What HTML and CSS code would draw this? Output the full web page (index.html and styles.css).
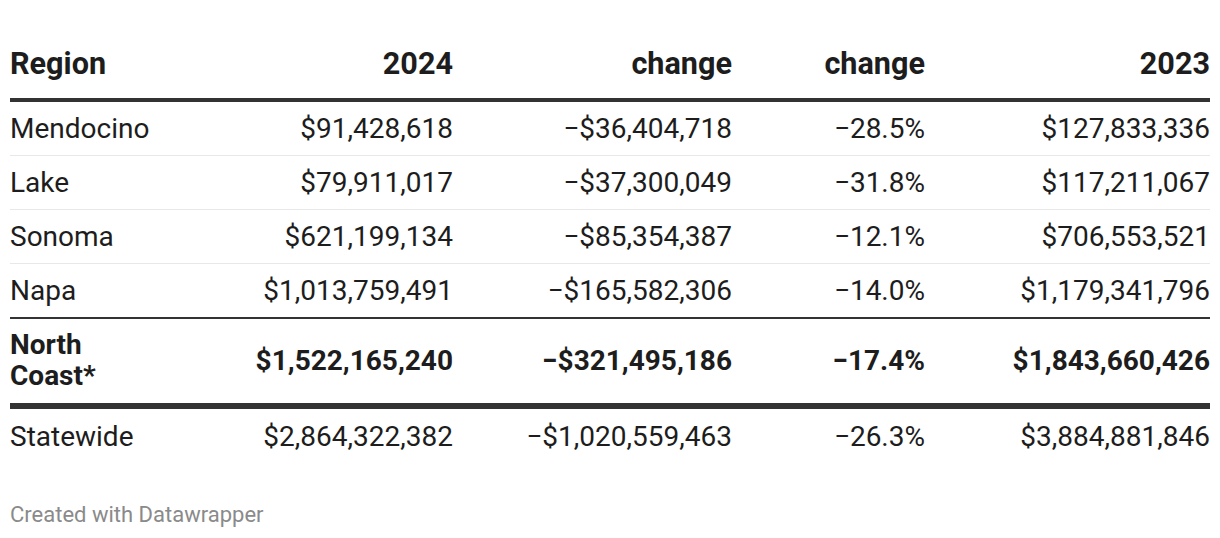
FILE: index.html
```html
<!DOCTYPE html>
<html lang="en">
<head>
<meta charset="utf-8">
<title>North Coast table</title>
<link rel="stylesheet" href="styles.css">
</head>
<body>
<div class="chart">
  <table class="dw-table">
    <colgroup>
      <col class="c-region">
      <col class="c-2024">
      <col class="c-change">
      <col class="c-pct">
      <col class="c-2023">
    </colgroup>
    <thead>
      <tr>
        <th class="left">Region</th>
        <th>2024</th>
        <th>change</th>
        <th>change</th>
        <th>2023</th>
      </tr>
    </thead>
    <tbody>
      <tr>
        <td class="left">Mendocino</td>
        <td>$91,428,618</td>
        <td>−$36,404,718</td>
        <td>−28.5%</td>
        <td>$127,833,336</td>
      </tr>
      <tr>
        <td class="left">Lake</td>
        <td>$79,911,017</td>
        <td>−$37,300,049</td>
        <td>−31.8%</td>
        <td>$117,211,067</td>
      </tr>
      <tr>
        <td class="left">Sonoma</td>
        <td>$621,199,134</td>
        <td>−$85,354,387</td>
        <td>−12.1%</td>
        <td>$706,553,521</td>
      </tr>
      <tr class="before-total">
        <td class="left">Napa</td>
        <td>$1,013,759,491</td>
        <td>−$165,582,306</td>
        <td>−14.0%</td>
        <td>$1,179,341,796</td>
      </tr>
      <tr class="total">
        <td class="left">North<br>Coast*</td>
        <td>$1,522,165,240</td>
        <td>−$321,495,186</td>
        <td>−17.4%</td>
        <td>$1,843,660,426</td>
      </tr>
      <tr class="last">
        <td class="left">Statewide</td>
        <td>$2,864,322,382</td>
        <td>−$1,020,559,463</td>
        <td>−26.3%</td>
        <td>$3,884,881,846</td>
      </tr>
    </tbody>
  </table>
  <div class="footer">Created with Datawrapper</div>
</div>
</body>
</html>
```

FILE: styles.css
```css
html, body {
  margin: 0;
  padding: 0;
  background: #ffffff;
}

body {
  font-family: Roboto, "Liberation Sans", Arial, sans-serif;
  color: #1d1d1d;
}

.chart {
  padding: 10px;
}

.dw-table {
  width: 1200px;
  border-collapse: collapse;
  table-layout: fixed;
  font-size: 28px;
  line-height: 31px;
}

.c-region { width: 142px; }
.c-2024 { width: 301px; }
.c-change { width: 279px; }
.c-pct { width: 193px; }
.c-2023 { width: 285px; }

.dw-table th {
  font-size: 30.6px;
  font-weight: 700;
  text-align: right;
  padding: 38px 0 19px;
  border-bottom: 4px solid #333333;
  vertical-align: bottom;
  white-space: nowrap;
}

.dw-table td {
  text-align: right;
  padding: 11px 0;
  border-bottom: 1px solid #e8e8e8;
  vertical-align: middle;
  white-space: nowrap;
}

.dw-table .left {
  text-align: left;
}

.dw-table tr.before-total td {
  border-bottom: 2px solid #333333;
}

.dw-table tr.total td {
  font-weight: 700;
  border-bottom: 6px solid #333333;
  padding: 10px 0 12px;
}

.dw-table tr.last td {
  border-bottom: none;
  padding: 12px 0 10px;
}

.footer {
  margin-top: 41px;
  font-size: 22px;
  line-height: 24px;
  color: #8a8a8a;
}
```
